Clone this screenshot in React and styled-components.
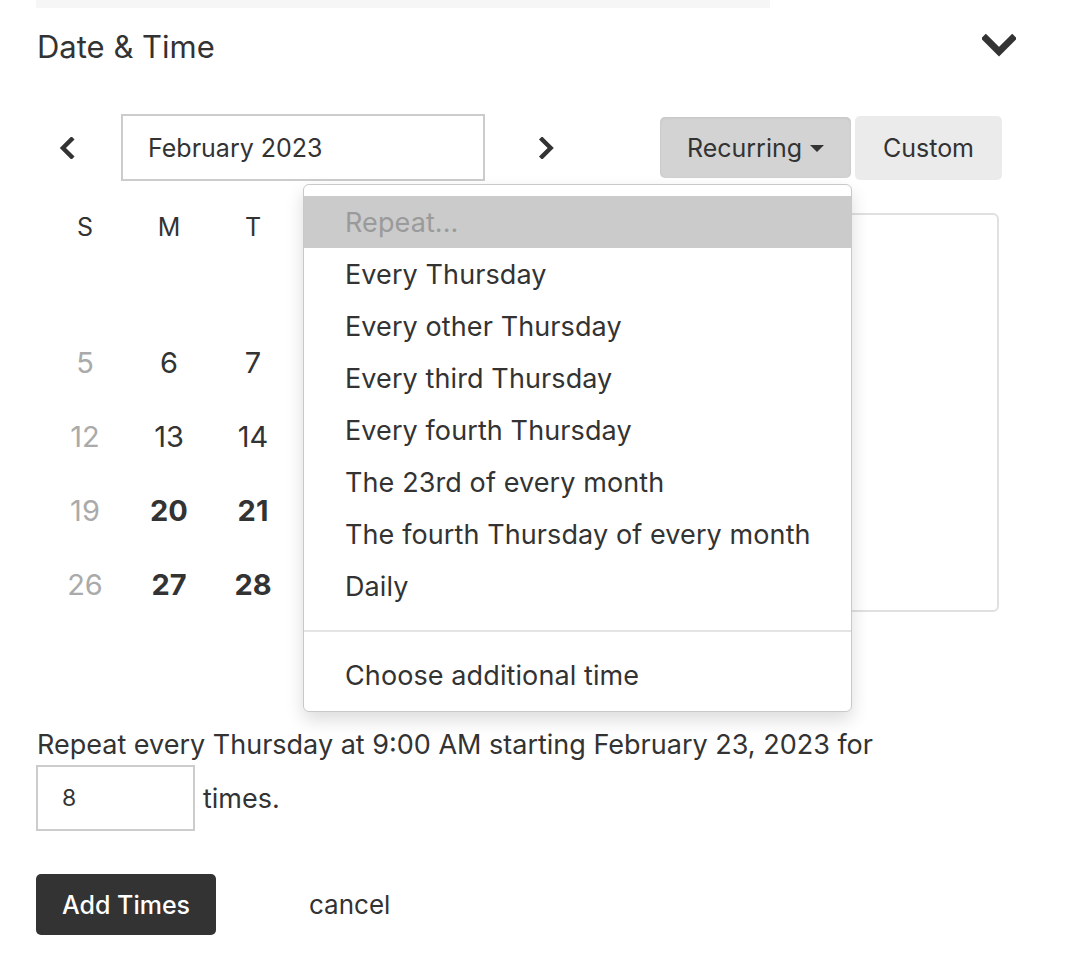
import React from "react";
import styled, { createGlobalStyle } from "styled-components";

const GlobalStyle = createGlobalStyle`
  body {
    margin: 0;
    background: #ffffff;
    font-family: Inter, "Noto Sans", sans-serif;
    color: #333333;
  }
`;

const Page = styled.div`
  width: 1080px;
  height: 960px;
  padding-left: 36px;
  box-sizing: border-box;
  overflow: hidden;
`;

const TopBar = styled.div`
  width: 734px;
  height: 8px;
  background: #f6f6f6;
`;

const Header = styled.div`
  display: flex;
  align-items: center;
  justify-content: space-between;
  width: 980px;
  height: 76px;
`;

const Title = styled.h2`
  margin: 0 0 0 1px;
  font-size: 31px;
  font-weight: 400;
`;

const Toolbar = styled.div`
  display: flex;
  align-items: center;
  height: 67px;
  margin-top: 30px;
  width: 966px;
`;

const ArrowButton = styled.button`
  display: flex;
  align-items: center;
  justify-content: center;
  width: 40px;
  height: 40px;
  margin: ${(p) => p.$margin};
  padding: 0;
  border: none;
  background: none;
  cursor: pointer;
`;

const MonthBox = styled.div`
  display: flex;
  align-items: center;
  width: 364px;
  height: 67px;
  box-sizing: border-box;
  border: 2px solid #cccccc;
  padding-left: 25px;
  font-size: 25px;
`;

const Spacer = styled.div`
  flex: 1;
`;

const RecurringWrap = styled.div`
  position: relative;
  height: 61px;
`;

const ModeButton = styled.button`
  display: flex;
  align-items: center;
  justify-content: center;
  gap: 8px;
  width: ${(p) => (p.$active ? "191px" : "147px")};
  height: ${(p) => (p.$active ? "61px" : "64px")};
  padding: 0;
  border: none;
  border-radius: 5px;
  background: ${(p) => (p.$active ? "#d3d3d3" : "#ebebeb")};
  box-shadow: ${(p) => (p.$active ? "inset 0 1px 3px rgba(0,0,0,0.08)" : "none")};
  margin-left: ${(p) => (p.$active ? "0" : "4px")};
  font-family: inherit;
  font-size: 25px;
  color: #333333;
  cursor: pointer;
`;

const Caret = styled.span`
  width: 0;
  height: 0;
  border-left: 7px solid transparent;
  border-right: 7px solid transparent;
  border-top: 7px solid #333333;
  margin-top: 2px;
`;

const Menu = styled.div`
  position: absolute;
  top: 67px;
  right: -1px;
  width: 549px;
  box-sizing: border-box;
  padding: 11px 0 10px;
  background: #ffffff;
  border: 1px solid #c9c9c9;
  border-radius: 6px;
  box-shadow: 0 8px 18px rgba(0, 0, 0, 0.14);
  z-index: 10;
`;

const MenuItem = styled.div`
  display: flex;
  align-items: center;
  height: 52px;
  padding-left: 41px;
  font-size: 27px;
  color: ${(p) => (p.$placeholder ? "#9a9a9a" : "#333333")};
  background: ${(p) => (p.$placeholder ? "#cbcbcb" : "transparent")};
  letter-spacing: 0.1px;
`;

const Divider = styled.div`
  height: 2px;
  background: #e4e4e4;
  margin: 18px 0 17px;
`;

const Body = styled.div`
  display: flex;
  align-items: flex-start;
  margin-top: 32px;
  width: 963px;
`;

const Calendar = styled.div`
  display: grid;
  grid-template-columns: repeat(7, 84px);
  grid-template-rows: 38px;
  grid-auto-rows: 74px;
  margin-left: 7px;
`;

const DayHead = styled.div`
  display: flex;
  align-items: flex-start;
  justify-content: center;
  font-size: 25px;
  line-height: 28px;
`;

const Day = styled.div`
  display: flex;
  align-items: center;
  justify-content: center;
  font-size: 29px;
  font-weight: ${(p) => (p.$bold ? 700 : 400)};
  color: ${(p) => (p.$muted ? "#aaaaaa" : "#333333")};
`;

const TimesPanel = styled.div`
  margin-left: auto;
  width: 330px;
  height: 399px;
  box-sizing: border-box;
  border: 2px solid #e0e0e0;
  border-radius: 6px;
`;

const Summary = styled.div`
  margin-top: 109px;
  font-size: 27px;
  line-height: 30px;
  margin-left: 1px;
`;

const CountRow = styled.div`
  display: flex;
  align-items: center;
  gap: 8px;
  margin-top: 5px;
  font-size: 27px;
`;

const CountInput = styled.div`
  display: flex;
  align-items: center;
  width: 159px;
  height: 66px;
  box-sizing: border-box;
  border: 2px solid #cccccc;
  padding-left: 24px;
  font-size: 23px;
`;

const Actions = styled.div`
  display: flex;
  align-items: center;
  margin-top: 43px;
`;

const PrimaryButton = styled.button`
  height: 61px;
  width: 180px;
  border: none;
  border-radius: 5px;
  background: #333333;
  color: #ffffff;
  font-family: inherit;
  font-size: 25px;
  font-weight: 500;
  cursor: pointer;
`;

const LinkButton = styled.button`
  margin-left: 93px;
  border: none;
  background: none;
  padding: 0;
  font-family: inherit;
  font-size: 26px;
  color: #333333;
  cursor: pointer;
`;

const Chevron = ({ dir, size = 18 }) => {
  const paths = {
    left: "M11 2 L4 9 L11 16",
    right: "M5 2 L12 9 L5 16",
    down: "M2 5 L9 12 L16 5",
  };
  return (
    <svg width={size} height={size} viewBox="0 0 18 18" fill="none">
      <path d={paths[dir]} stroke="#333" strokeWidth="3.6" strokeLinecap="square" strokeLinejoin="miter" />
    </svg>
  );
};

const weekdays = ["S", "M", "T", "W", "T", "F", "S"];

const days = [
  [null, null, null, 1, 2, 3, 4],
  [5, 6, 7, 8, 9, 10, 11],
  [12, 13, 14, 15, 16, 17, 18],
  [19, 20, 21, 22, 23, 24, 25],
  [26, 27, 28, null, null, null, null],
];

const options = [
  "Every Thursday",
  "Every other Thursday",
  "Every third Thursday",
  "Every fourth Thursday",
  "The 23rd of every month",
  "The fourth Thursday of every month",
  "Daily",
];

export default function App() {
  return (
    <>
      <GlobalStyle />
      <Page>
        <TopBar />
        <Header>
          <Title>Date &amp; Time</Title>
          <Chevron dir="down" size={34} />
        </Header>

        <Toolbar>
          <ArrowButton $margin="0 32px 0 13px">
            <Chevron dir="left" size={22} />
          </ArrowButton>
          <MonthBox>February 2023</MonthBox>
          <ArrowButton $margin="0 0 0 42px">
            <Chevron dir="right" size={22} />
          </ArrowButton>
          <Spacer />
          <RecurringWrap>
            <ModeButton $active>
              Recurring <Caret />
            </ModeButton>
            <Menu>
              <MenuItem $placeholder>Repeat...</MenuItem>
              {options.map((o) => (
                <MenuItem key={o}>{o}</MenuItem>
              ))}
              <Divider />
              <MenuItem>Choose additional time</MenuItem>
            </Menu>
          </RecurringWrap>
          <ModeButton>Custom</ModeButton>
        </Toolbar>

        <Body>
          <Calendar>
            {weekdays.map((d, i) => (
              <DayHead key={i}>{d}</DayHead>
            ))}
            {days.flat().map((d, i) => {
              const sunday = i % 7 === 0;
              return (
                <Day key={i} $muted={sunday} $bold={!sunday && d !== null && d >= 20}>
                  {d}
                </Day>
              );
            })}
          </Calendar>
          <TimesPanel />
        </Body>

        <Summary>Repeat every Thursday at 9:00 AM starting February 23, 2023 for</Summary>
        <CountRow>
          <CountInput>8</CountInput>
          times.
        </CountRow>
        <Actions>
          <PrimaryButton>Add Times</PrimaryButton>
          <LinkButton>cancel</LinkButton>
        </Actions>
      </Page>
    </>
  );
}
